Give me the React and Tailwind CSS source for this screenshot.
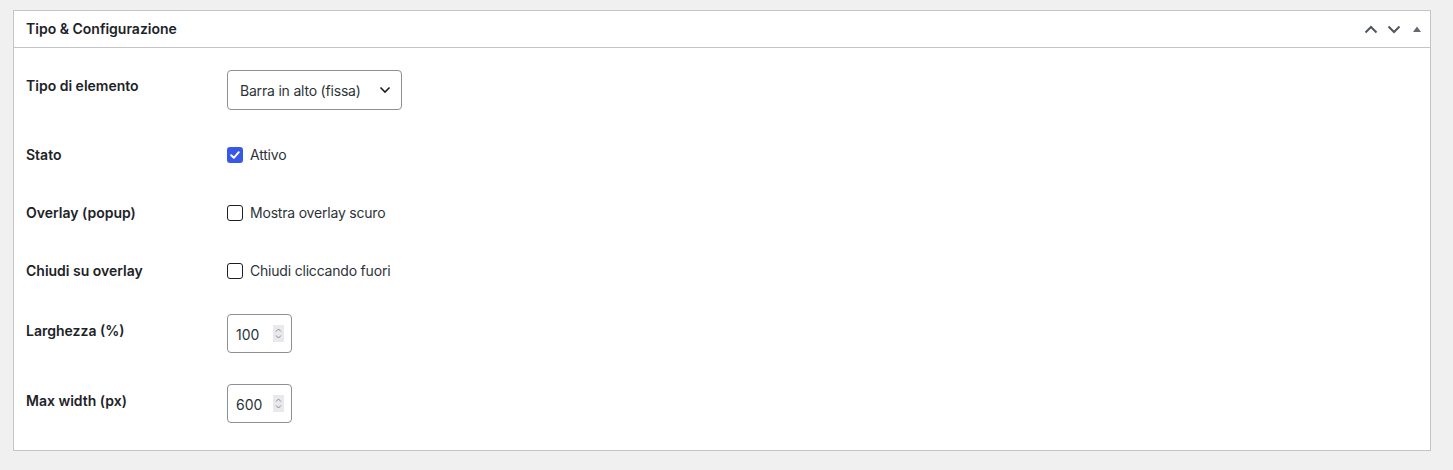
import React from "react";

const font = { fontFamily: "Inter, 'Noto Sans', 'Liberation Sans', sans-serif" };

function Checkbox({ checked }) {
  if (checked) {
    return (
      <span className="flex h-[16px] w-[16px] items-center justify-center rounded-[3px] bg-[#3858e9]">
        <svg width="12" height="12" viewBox="0 0 12 12">
          <path d="M2.2 6.2 L4.8 8.8 L9.8 3.2" fill="none" stroke="#fff" strokeWidth="2" strokeLinecap="round" strokeLinejoin="round" />
        </svg>
      </span>
    );
  }
  return <span className="block h-[16px] w-[16px] rounded-[3px] border border-[#1e1e1e] bg-white" />;
}

function NumberBox({ value }) {
  return (
    <div className="mt-[15px] flex h-[39px] w-[65px] items-center rounded-[4px] border border-[#8c8f94] bg-white pl-[8px]">
      <span className="w-[37px] pt-[2px] text-[14px] text-[#2c3338]">{value}</span>
      <span className="flex h-[17px] w-[11px] items-center justify-center bg-[#e9e9ed]">
        <svg width="9" height="15" viewBox="0 0 9 15">
          <path d="M2 5.5 L4.5 3 L7 5.5" fill="none" stroke="#8a8a8f" strokeWidth="1" />
          <path d="M2 9.5 L4.5 12 L7 9.5" fill="none" stroke="#8a8a8f" strokeWidth="1" />
        </svg>
      </span>
    </div>
  );
}

function CheckRow({ label, text, checked }) {
  return (
    <div className="flex h-[58px]">
      <div className="w-[201px] pt-[20px] text-[14px] font-semibold leading-[20px] text-[#1d2327]">{label}</div>
      <div className="mt-[20px] flex h-[20px] items-center gap-[7px] text-[14px] tracking-[-0.2px] text-[#2c3338]">
        <Checkbox checked={checked} />
        <span className="leading-[20px]">{text}</span>
      </div>
    </div>
  );
}

export default function App() {
  return (
    <div className="min-h-[470px] bg-[#f0f0f1] pl-[13px] pr-[22px] pt-[10px]" style={font}>
      <div className="border border-[#c3c4c7] bg-white">
        <div className="flex h-[37px] items-center justify-between border-b border-[#c3c4c7] pl-[12px] pr-[2px]">
          <span className="pb-[2px] text-[14px] font-semibold text-[#1d2327]">Tipo &amp; Configurazione</span>
          <div className="flex items-center">
            <span className="flex h-[36px] w-[23px] items-center justify-center">
              <svg width="14" height="9" viewBox="0 0 14 9">
                <path d="M1.5 7.5 L7 2 L12.5 7.5" fill="none" stroke="#50575e" strokeWidth="2" />
              </svg>
            </span>
            <span className="flex h-[36px] w-[23px] items-center justify-center">
              <svg width="14" height="9" viewBox="0 0 14 9">
                <path d="M1.5 1.5 L7 7 L12.5 1.5" fill="none" stroke="#50575e" strokeWidth="2" />
              </svg>
            </span>
            <span className="flex h-[36px] w-[23px] items-center justify-center">
              <svg width="10" height="8" viewBox="0 0 10 8">
                <path d="M1 7 L5 1.5 L9 7 Z" fill="#646970" />
              </svg>
            </span>
          </div>
        </div>
        <div className="px-[12px] pb-[12px] pt-[7px]">
          <div className="flex h-[70px]">
            <div className="w-[201px] pt-[21px] text-[14px] font-semibold leading-[20px] text-[#1d2327]">Tipo di elemento</div>
            <div className="mt-[15px] flex h-[40px] w-[175px] items-center justify-between rounded-[4px] border border-[#8c8f94] bg-white pl-[12px] pr-[10px] text-[14px] tracking-[-0.2px] text-[#2c3338]">
              <span>Barra in alto (fissa)</span>
              <svg width="12" height="8" viewBox="0 0 12 8">
                <path d="M1.5 1.5 L6 6 L10.5 1.5" fill="none" stroke="#1e1e1e" strokeWidth="1.6" />
              </svg>
            </div>
          </div>
          <CheckRow label="Stato" text="Attivo" checked />
          <CheckRow label="Overlay (popup)" text="Mostra overlay scuro" />
          <CheckRow label="Chiudi su overlay" text="Chiudi cliccando fuori" />
          <div className="flex h-[70px]">
            <div className="w-[201px] pt-[22px] text-[14px] font-semibold leading-[20px] text-[#1d2327]">Larghezza (%)</div>
            <NumberBox value="100" />
          </div>
          <div className="flex h-[69px]">
            <div className="w-[201px] pt-[22px] text-[14px] font-semibold leading-[20px] text-[#1d2327]">Max width (px)</div>
            <NumberBox value="600" />
          </div>
        </div>
      </div>
    </div>
  );
}
